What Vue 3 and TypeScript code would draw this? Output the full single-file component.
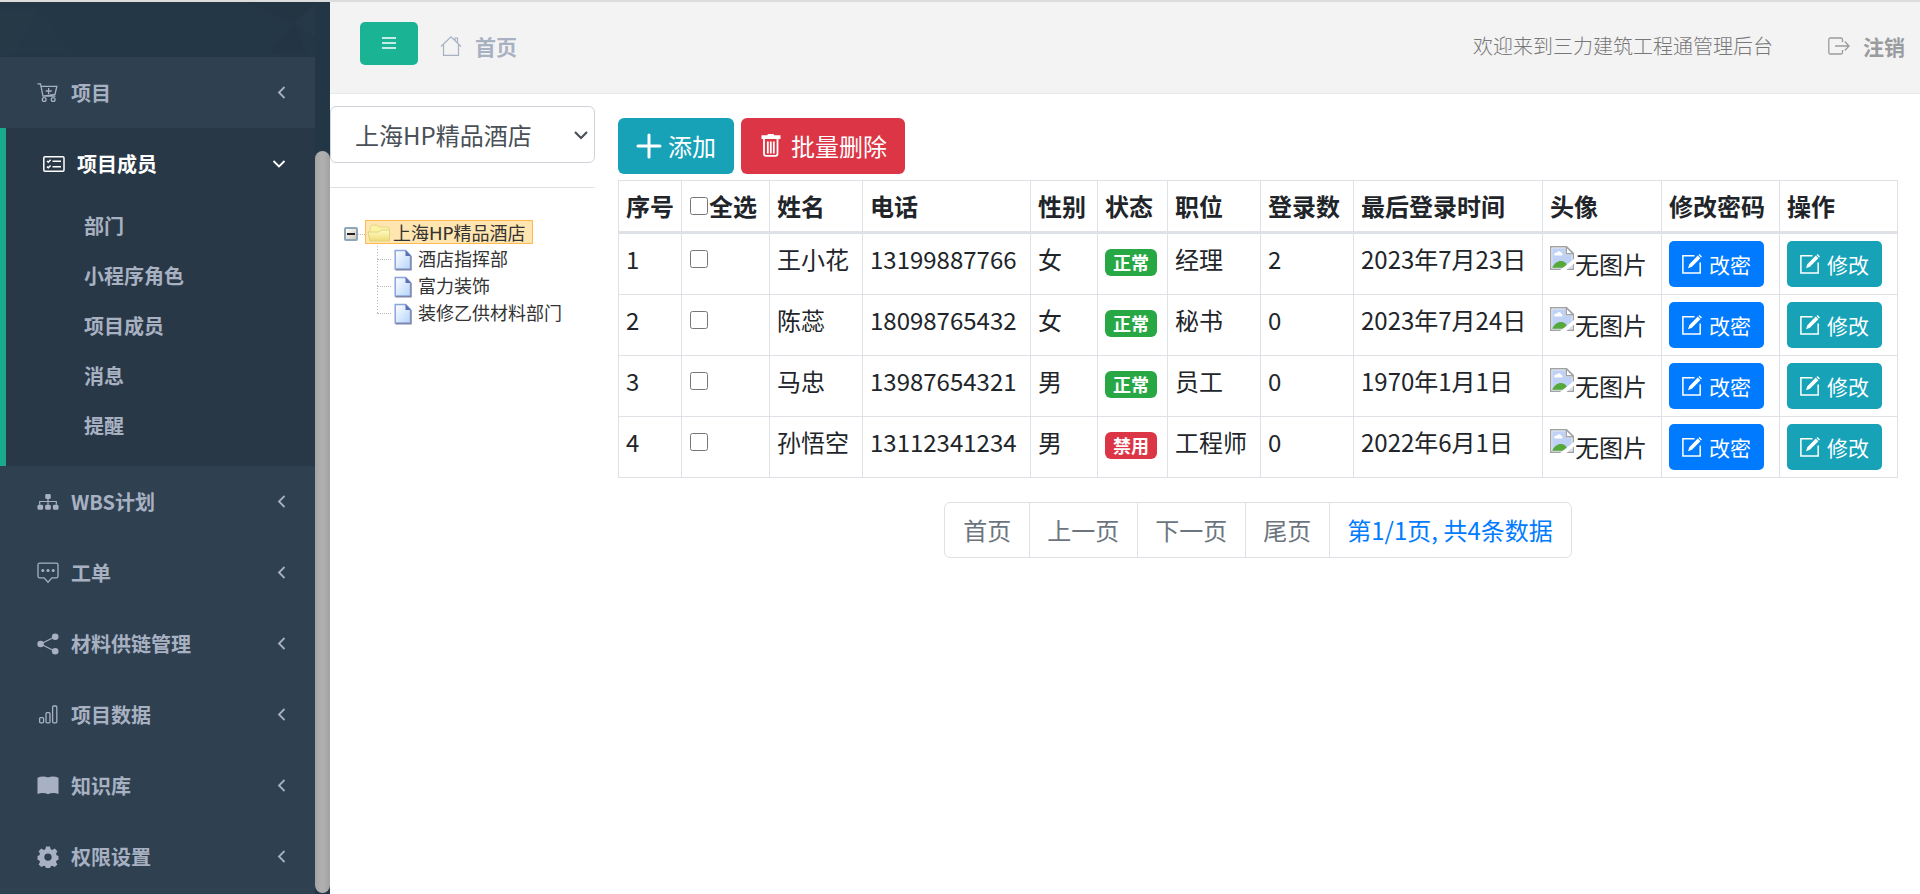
<script setup lang="ts">
import { ref, computed } from 'vue'

interface MenuItem {
  label: string
  icon: string
  children?: string[]
}
interface Member {
  id: number
  name: string
  phone: string
  gender: string
  active: boolean
  job: string
  logins: number
  last: string
}

const menu: MenuItem[] = [
  { label: '项目', icon: 'cart' },
  { label: '项目成员', icon: 'card', children: ['部门', '小程序角色', '项目成员', '消息', '提醒'] },
  { label: 'WBS计划', icon: 'sitemap' },
  { label: '工单', icon: 'chat' },
  { label: '材料供链管理', icon: 'share' },
  { label: '项目数据', icon: 'bars' },
  { label: '知识库', icon: 'book' },
  { label: '权限设置', icon: 'gear' },
]
const opened = ref('项目成员')

const members: Member[] = [
  { id: 1, name: '王小花', phone: '13199887766', gender: '女', active: true, job: '经理', logins: 2, last: '2023年7月23日' },
  { id: 2, name: '陈蕊', phone: '18098765432', gender: '女', active: true, job: '秘书', logins: 0, last: '2023年7月24日' },
  { id: 3, name: '马忠', phone: '13987654321', gender: '男', active: true, job: '员工', logins: 0, last: '1970年1月1日' },
  { id: 4, name: '孙悟空', phone: '13112341234', gender: '男', active: false, job: '工程师', logins: 0, last: '2022年6月1日' },
]
const selected = ref<number[]>([])
const allSelected = computed({
  get: () => selected.value.length === members.length,
  set: (on: boolean) => { selected.value = on ? members.map((m) => m.id) : [] },
})
const departments = ['酒店指挥部', '富力装饰', '装修乙供材料部门']
const project = ref('上海HP精品酒店')
</script>

<template>
  <div class="page">
    <aside class="sidebar">
      <nav class="menu">
        <div class="brand">
          <svg viewBox="0 0 315 55" preserveAspectRatio="none" aria-hidden="true">
            <path d="M0 7 38 7 15 51 0 55z" fill="#253947" />
            <path d="M38 7 73 53 15 51z" fill="#253847" />
            <path d="M246 0 315 0 294 20z" fill="#233442" />
            <path d="M294 20 315 3 315 36z" fill="#263947" />
            <path d="M294 20 272 51 306 51z" fill="#233442" />
          </svg>
        </div>
        <div v-for="item in menu" :key="item.label" :class="['group', { open: item.label === opened }]">
          <a href="#" class="item" @click.prevent="opened = item.label">
            <svg class="mi" viewBox="0 0 22 22" fill="none" stroke="currentColor" stroke-width="1.3" aria-hidden="true">
              <template v-if="item.icon === 'cart'">
                <path d="M.5 1.8h3L6 14.2h12.5M4.2 4.4h15.6L18 12.4 5.8 14.2" />
                <path d="M11.6 6v6M8.7 9h6" />
                <circle cx="7.2" cy="17.5" r="1.9" /><circle cx="16.2" cy="17.5" r="1.9" />
              </template>
              <template v-else-if="item.icon === 'card'">
                <rect x=".8" y="3.8" width="20.2" height="14.4" rx="1.2" stroke-width="1.5" />
                <path d="M9.5 8.2H18M9.5 13.7H18M4 8l1.3 1.2L7.6 6.8M4 13.6l1.3 1.2 2.3-2.4" stroke-width="1.5" />
              </template>
              <g v-else-if="item.icon === 'sitemap'" fill="currentColor" stroke="none">
                <rect x="8.2" y="3" width="5.6" height="5" rx="1.4" />
                <rect x=".5" y="13.8" width="5.6" height="5" rx="1.4" />
                <rect x="8.2" y="13.8" width="5.6" height="5" rx="1.4" />
                <rect x="15.9" y="13.8" width="5.6" height="5" rx="1.4" />
                <path d="M10.4 7h1.2v2.9h8.3v3.9h-1.2V11.1h-7.1v2.7h-1.2v-2.7H3.3v2.7H2.1V9.9h8.3z" />
              </g>
              <template v-else-if="item.icon === 'chat'">
                <path d="M2.500 1.200h17a1.500 1.500 0 0 1 1.500 1.500v11.600a1.500 1.500 0 0 1-1.500 1.500h-4.600L11 20.200 7.100 15.800H2.500A1.500 1.500 0 0 1 1 14.300V2.700a1.500 1.500 0 0 1 1.500-1.500z" />
                <g fill="currentColor" stroke="none"><circle cx="5.8" cy="8.6" r="1.5" /><circle cx="11" cy="8.6" r="1.5" /><circle cx="16.2" cy="8.6" r="1.5" /></g>
              </template>
              <template v-else-if="item.icon === 'share'">
                <path d="M18 3.700 3.700 11 18 18.200" stroke-width="1.2" />
                <g fill="currentColor" stroke="none"><circle cx="18.2" cy="3.8" r="3.3" /><circle cx="3.6" cy="11" r="3.3" /><circle cx="18.2" cy="18.2" r="3.3" /></g>
              </template>
              <template v-else-if="item.icon === 'bars'">
                <rect x="2.6" y="13.6" width="4" height="5.2" rx="1" /><rect x="9" y="8.6" width="4" height="10.2" rx="1" /><rect x="15.6" y="2" width="4.2" height="16.8" rx="1" />
              </template>
              <path v-else-if="item.icon === 'book'" fill="currentColor" stroke="none" d="M.5 2.8C4 1.2 8 1.2 11 2.6 14 1.2 18 1.2 21.5 2.8V19C18 17.600 14 17.700 11 19.200 8 17.700 4 17.600.5 19z" />
              <path v-else fill="currentColor" stroke="none" fill-rule="evenodd" d="M9 .6h4l.7 2.7 1.5.6 2.5-1.4 2.7 2.7-1.4 2.5.6 1.5 1.9.7v3.8l-1.9.7-.6 1.5 1.4 2.5-2.7 2.7-2.5-1.4-1.5.6-.7 2h-4l-.7-2-1.5-.6-2.5 1.4-2.7-2.7 1.4-2.5-.6-1.5-1.9-.7V9.900l1.900-.7.6-1.5L1.600 5.200l2.700-2.700 2.500 1.400 1.500-.6zM11 7.400a3.700 3.700 0 1 0 0 7.400 3.700 3.700 0 0 0 0-7.400z" />
            </svg>
            <span>{{ item.label }}</span>
            <svg class="arrow" viewBox="0 0 14 14" fill="none" stroke="currentColor" stroke-width="1.8" aria-hidden="true">
              <path :d="item.label === opened ? 'M1.500 4 7 9.500 12.500 4' : 'M10.500 1 5 6.500l5.500 5.500'" />
            </svg>
          </a>
          <ul v-if="item.children && item.label === opened" class="sub">
            <li v-for="child in item.children" :key="child"><a href="#">{{ child }}</a></li>
          </ul>
        </div>
      </nav>
      <div class="track"><div class="thumb"></div></div>
    </aside>

    <main class="main">
      <header class="topbar">
        <button class="toggle" type="button" aria-label="菜单">
          <svg viewBox="0 0 16 14" stroke="currentColor" stroke-width="1.6" aria-hidden="true"><path d="M1 2h14M1 7h14M1 12h14" /></svg>
        </button>
        <a href="#" class="home">
          <svg viewBox="0 0 22 22" fill="none" stroke="currentColor" stroke-width="1.2" aria-hidden="true">
            <path d="M1 11.500 11 1.800l10 9.700M3.500 9.500v10.800h15V9.500M15 5.600V3h2.500v5" />
          </svg>
          <span>首页</span>
        </a>
        <span class="welcome">欢迎来到三力建筑工程通管理后台</span>
        <a href="#" class="logout">
          <svg viewBox="0 0 22 22" fill="none" stroke="currentColor" stroke-width="1.3" aria-hidden="true">
            <path d="M14.500 7V4.500a1.500 1.500 0 0 0-1.500-1.500H2.300A1.500 1.500 0 0 0 .8 4.500v13A1.500 1.500 0 0 0 2.300 19H13a1.500 1.500 0 0 0 1.500-1.500V15M7 11h14M16.800 6.500 21 11l-4.200 4.500" />
          </svg>
          <span>注销</span>
        </a>
      </header>

      <div class="content">
        <section class="left">
          <div class="selectbox">
            <select v-model="project" aria-label="项目">
              <option>上海HP精品酒店</option>
            </select>
            <svg viewBox="0 0 14 14" fill="none" stroke="currentColor" stroke-width="2.2" aria-hidden="true"><path d="M1 4l6 6 6-6" /></svg>
          </div>
          <hr />
          <div class="tree">
            <div class="root">
              <button type="button" class="collapse" aria-label="折叠"></button>
              <i class="dots"></i>
              <a href="#" class="picked">
                <svg class="folder" viewBox="0 0 24 20" aria-hidden="true">
                  <defs><linearGradient id="fold" x1="0" y1="0" x2="0" y2="1"><stop offset="0" stop-color="#fffbc4" /><stop offset="1" stop-color="#eedb78" /></linearGradient></defs>
                  <path d="M3 17V4l2-2h5l2 2h10v13z" fill="#fbf3a4" stroke="#e6d78a" />
                  <path d="M1 9h11l2-2h8.500v11H3z" fill="url(#fold)" stroke="#e3d27c" />
                </svg>
                <span>{{ project }}</span>
              </a>
            </div>
            <ul>
              <li v-for="d in departments" :key="d">
                <i class="dots"></i>
                <a href="#">
                  <svg class="doc" viewBox="0 0 18 22" aria-hidden="true">
                    <defs><linearGradient id="sheet" x1="0" y1="0" x2="1" y2="1"><stop offset="0" stop-color="#fff" /><stop offset="1" stop-color="#b4d4fb" /></linearGradient></defs>
                    <path d="M1.200 1.500h10.300l5 5v13.500H1.200z" fill="url(#sheet)" stroke="#8ca4dc" stroke-width="1.5" />
                    <path d="M1.500 20.800h15.500V7" fill="none" stroke="#8086a8" stroke-width="1.4" />
                    <path d="M11.500 1v6H17z" fill="#5a70b4" />
                  </svg>
                  <span>{{ d }}</span>
                </a>
              </li>
            </ul>
          </div>
        </section>

        <section class="right">
          <div class="actions">
            <button type="button" class="btn info">
              <svg viewBox="0 0 26 26" stroke="currentColor" stroke-width="3" stroke-linecap="round" aria-hidden="true"><path d="M13 2v22M2 13h22" /></svg>添加
            </button>
            <button type="button" class="btn danger">
              <svg viewBox="0 0 24 26" fill="none" stroke="currentColor" stroke-width="1.8" aria-hidden="true">
                <path d="M4 6v14.800a2 2 0 0 0 2 2h9.500a2 2 0 0 0 2-2V6M7.800 8.500v12M10.800 8.500v12M13.800 8.500v12" />
                <path d="M8 1h5.500l.8 1.200h6.200v3.800h-19V2.200h5.700z" fill="currentColor" stroke="none" />
              </svg>批量删除
            </button>
          </div>
          <table>
            <colgroup>
              <col class="w63" /><col class="w88" /><col class="w93" /><col class="w168" /><col class="w67" /><col class="w70" /><col class="w93" /><col class="w93" /><col class="w189" /><col class="w119" /><col class="w118" /><col class="w118" />
            </colgroup>
            <thead>
              <tr>
                <th>序号</th>
                <th><label class="all"><input v-model="allSelected" type="checkbox" />全选</label></th>
                <th>姓名</th><th>电话</th><th>性别</th><th>状态</th><th>职位</th><th>登录数</th><th>最后登录时间</th><th>头像</th><th>修改密码</th><th>操作</th>
              </tr>
            </thead>
            <tbody>
              <tr v-for="m in members" :key="m.id">
                <td>{{ m.id }}</td>
                <td><input v-model="selected" type="checkbox" :value="m.id" :aria-label="m.name" /></td>
                <td>{{ m.name }}</td>
                <td>{{ m.phone }}</td>
                <td>{{ m.gender }}</td>
                <td><span :class="['badge', m.active ? 'on' : 'off']">{{ m.active ? '正常' : '禁用' }}</span></td>
                <td>{{ m.job }}</td>
                <td>{{ m.logins }}</td>
                <td>{{ m.last }}</td>
                <td>
                  <div class="avatar">
                    <svg viewBox="0 0 24 24" aria-hidden="true">
                      <path d="M.7.7h15.800l6.800 6.600v16H.7z" fill="#fff" stroke="#a0a3a6" stroke-width="1.4" />
                      <path d="M2.200 2.200h13.300v6.600h6.300v13H2.200z" fill="#bfd1f4" />
                      <path d="M4.500 9.500c-1-2 1-3.500 2.500-2.800C8 4.500 11 5 11.200 7c1.500 0 2 2.500.5 2.500z" fill="#fff" />
                      <path d="M2.200 21.800c2-4.500 6-7.300 9.800-6.700 3 .3 5 3 6 6.700z" fill="#55a83a" />
                      <path d="M16.300.8v6.900h7z" fill="#fff" stroke="#a0a3a6" stroke-width="1.4" />
                      <path d="M24 13v4.500L16.500 24H10z" fill="#fff" />
                    </svg><span>无图片</span>
                  </div>
                </td>
                <td v-for="b in ['改密', '修改']" :key="b">
                  <button type="button" :class="['btn', 'small', b === '改密' ? 'primary' : 'info']">
                    <svg viewBox="0 0 20 20" fill="none" stroke="currentColor" stroke-width="1.5" aria-hidden="true">
                      <path d="M12.500 1.800H.9v17.300h17.300V8.500" />
                      <path d="M6 14.200l1.300-4L15.800 1.600l2.600 2.600L9.900 12.800z M16.500.9l1-.9 2.500 2.500-1 1z" fill="currentColor" stroke="none" />
                    </svg>{{ b }}
                  </button>
                </td>
              </tr>
            </tbody>
          </table>
          <nav class="pager" aria-label="分页">
            <a v-for="p in ['首页', '上一页', '下一页', '尾页']" :key="p" href="#">{{ p }}</a>
            <a href="#" class="current">第1/1页, 共4条数据</a>
          </nav>
        </section>
      </div>
    </main>
  </div>
</template>

<style>
body { margin: 0; background: #fff; }
</style>

<style scoped>
* { box-sizing: border-box; }
.page {
  display: flex;
  min-height: 100vh;
  border-top: 2px solid #dcdcdc;
  font-family: "Noto Sans CJK SC", sans-serif;
  font-size: 24px;
  line-height: 36px;
  color: #212529;
}
a { color: inherit; text-decoration: none; }
ul { list-style: none; margin: 0; padding: 0; }
button { font-family: inherit; border: 0; cursor: pointer; }
svg { flex: none; }

.sidebar { display: flex; width: 330px; flex: none; background: #2f4050; }
.menu { flex: 1; color: #a7b1c2; font-size: 20px; font-weight: 700; }
.brand { height: 55px; background: #243746; }
.brand svg { display: block; width: 100%; height: 100%; }
.item { display: flex; align-items: center; height: 71px; padding: 0 27px 0 37px; }
.mi { width: 22px; height: 22px; margin-right: 12px; }
.arrow { width: 14px; height: 14px; margin-left: auto; }
.open { background: #293846; border-left: 6px solid #19aa8d; padding-bottom: 15px; }
.open .item { padding-right: 29px; color: #fff; }
.sub { padding-top: 2px; }
.sub a { display: block; line-height: 50px; padding-left: 78px; }
.track { display: flex; flex-direction: column; width: 15px; background: #233645; }
.thumb { flex: 1; margin: 149px 0 1px; border-radius: 8px; background: linear-gradient(90deg, #a3a3a3, #b0b0b0 40%, #aeaeae 65%, #a0a0a0); }

.main { flex: 1; min-width: 0; }
.topbar { display: flex; align-items: center; height: 92px; padding: 0 15px 3px 30px; background: #f3f3f3; border-bottom: 1px solid #e7eaec; }
.toggle { display: flex; align-items: center; justify-content: center; width: 58px; height: 43px; margin-bottom: 5px; padding: 0 0 2px; border-radius: 5px; background: #1ab394; color: #fff; }
.toggle svg { width: 16px; height: 14px; }
.home, .logout { display: flex; align-items: center; gap: 13px; font-size: 21px; font-weight: 700; color: #a7b1c2; }
.home { margin-left: 22px; }
.home svg, .logout svg { width: 22px; height: 22px; }
.welcome { margin-left: auto; font-size: 20px; font-weight: 300; color: #777; }
.logout { margin-left: 55px; color: #999c9e; }

.content { display: flex; align-items: flex-start; padding: 12px 22px 0 0; }
.left { width: 265px; flex: none; margin-right: 23px; }
.selectbox { position: relative; }
.selectbox select { appearance: none; display: block; width: 100%; height: 57px; padding: 0 32px 0 24px; border: 1px solid #ced4da; border-radius: 6px; background: #fff; color: #495057; font-family: inherit; font-size: 24px; }
.selectbox svg { position: absolute; right: 7px; top: 22px; width: 14px; height: 14px; color: #495057; pointer-events: none; }
hr { margin: 24px 0 32px; border: 0; border-top: 1px solid #dfe1e4; }
.tree { padding-left: 14px; font-family: "DejaVu Sans", "Noto Sans CJK SC", sans-serif; font-size: 18px; line-height: 27px; color: #333; }
.root { display: flex; align-items: center; height: 24px; }
.collapse { display: flex; align-items: center; justify-content: center; width: 14px; height: 14px; margin-top: 4px; padding: 0; border: 2px solid #8ea6b9; border-radius: 2px; background: linear-gradient(135deg, #fff, #cfc7b8); }
.collapse::before { content: ""; width: 8px; height: 2px; background: #222; }
.dots { flex: none; border-top: 1px dotted #bbb; }
.root .dots { width: 7px; margin-top: 4px; }
.picked { display: flex; align-items: center; height: 24px; padding: 2px 7px 0 1px; border: 1px solid #ffb951; background: #ffe6b0; white-space: nowrap; }
.folder { width: 24px; height: 20px; margin-right: 2px; }
.tree ul { margin: 2px 0 0 33px; }
.tree li { display: flex; align-items: center; height: 27px; background: repeating-linear-gradient(#bbb 0 1px, transparent 1px 3px) 0 0 / 1px 100% no-repeat; }
.tree li:last-child { background-size: 1px 50%; }
.tree li .dots { width: 14px; margin-right: 3px; }
.tree li a { display: flex; align-items: center; gap: 6px; white-space: nowrap; }
.doc { width: 18px; height: 22px; }

.right { flex: 1; min-width: 0; padding-top: 12px; }
.actions { display: flex; gap: 7px; margin-bottom: 6px; }
.btn { display: inline-flex; align-items: center; gap: 6px; height: 56px; padding: 0 18px; border-radius: 6px; color: #fff; font-size: 24px; line-height: 36px; white-space: nowrap; }
.btn svg { width: 26px; height: 26px; }
.btn.info { background: #17a2b8; }
.btn.danger { background: #dc3545; }
.btn.primary { background: #007bff; }
.btn.small { height: 46px; padding: 0 13px; gap: 7px; border-radius: 5px; font-size: 21px; vertical-align: top; }
.btn.small svg { width: 20px; height: 20px; }

table { width: 100%; table-layout: fixed; border-collapse: collapse; }
th, td { padding: 7px; border: 1px solid #dee2e6; text-align: left; vertical-align: top; white-space: nowrap; }
th { font-weight: 700; border-bottom: 3px solid #dee2e6; }
td { height: 61px; }
.w63 { width: 63px; }
.w67 { width: 67px; }
.w70 { width: 70px; }
.w88 { width: 88px; }
.w93 { width: 93px; }
.w118 { width: 118px; }
.w119 { width: 119px; }
.w168 { width: 168px; }
.w189 { width: 189px; }
input[type="checkbox"] { width: 18px; height: 18px; margin: 9px 1px; vertical-align: top; }
.all { display: flex; }
.badge { display: inline-block; margin-top: 8px; padding: 0 8px; border-radius: 6px; color: #fff; font-size: 18px; line-height: 27px; font-weight: 700; vertical-align: top; }
.on { background: #28a745; }
.off { background: #dc3545; }
.avatar { display: flex; align-items: flex-start; gap: 1px; }
.avatar svg { width: 24px; height: 24px; margin-top: 5px; }
.avatar span { margin-top: 5px; }

.pager { display: flex; width: fit-content; margin: 24px auto 0; border: 1px solid #dee2e6; border-radius: 6px; }
.pager a { padding: 9px 18px; color: #6c757d; white-space: nowrap; }
.pager a + a { padding-left: 17px; border-left: 1px solid #dee2e6; }
.pager .current { color: #007bff; }
</style>
